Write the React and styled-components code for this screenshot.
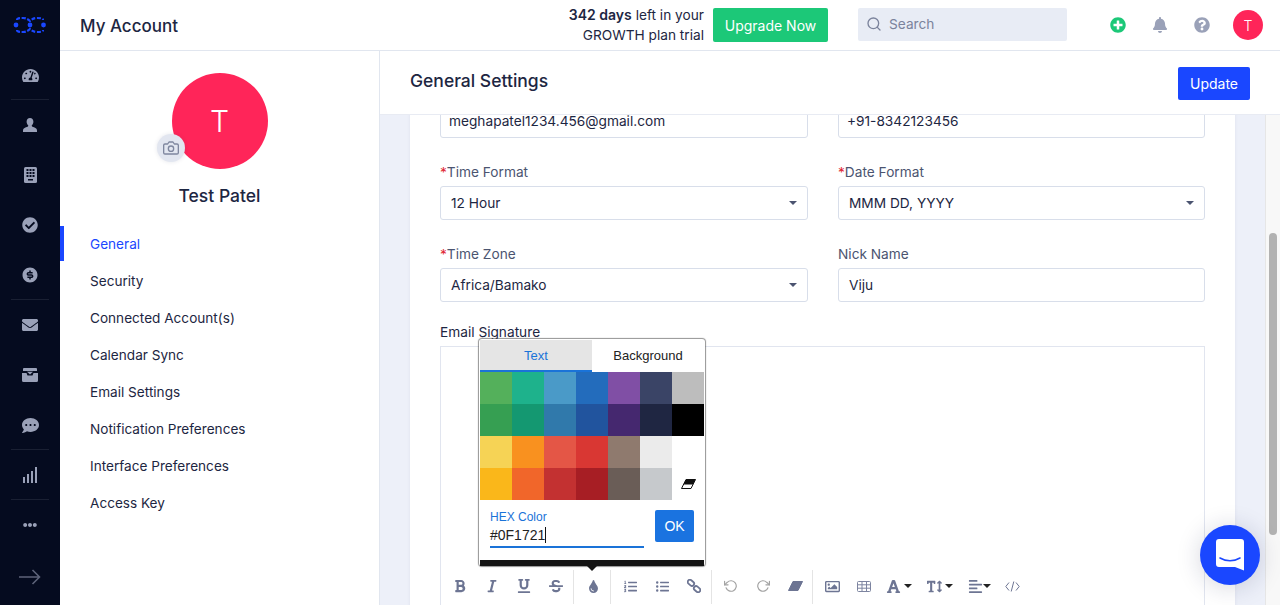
import React from 'react';
import styled, { createGlobalStyle } from 'styled-components';
import {
  FaBold, FaItalic, FaUnderline, FaStrikethrough, FaTint, FaListOl, FaListUl,
  FaRegImage, FaFont, FaTextHeight, FaAlignLeft, FaTachometerAlt, FaCheckCircle,
  FaEnvelope, FaCommentDots, FaBell, FaQuestionCircle, FaPlusCircle, FaEllipsisH,
} from 'react-icons/fa';
import { RiMoneyDollarCircleFill } from 'react-icons/ri';
import { FiCamera, FiSearch, FiRotateCcw, FiRotateCw } from 'react-icons/fi';

const Global = createGlobalStyle`
  html, body { margin: 0; height: 605px; overflow: hidden; background: #fff; }
  * { box-sizing: border-box; }
  body { font-family: Inter, "Noto Sans", sans-serif; color: #1d2642; }
`;

const Shell = styled.div`display: flex; width: 1280px; height: 605px; overflow: hidden; position: relative;`;
const Rail = styled.nav`width: 60px; flex: none; background: #050b1f; display: flex; flex-direction: column; align-items: center; color: #9aa1b8;`;
const LogoSlot = styled.div`height: 50px; display: flex; align-items: center; justify-content: center;`;
const RailItem = styled.div`
  width: 100%; height: 50px; display: flex; align-items: center; justify-content: center; font-size: ${p => p.$size || 16}px;
  position: relative; padding-top: ${p => p.$drop || 0}px;
  ${p => p.$rule ? `&::after { content: ''; position: absolute; left: 11px; right: 11px; bottom: 0; height: 1px; background: #1a2033; }` : ''}
`;
const Main = styled.div`flex: 1; min-width: 0; display: flex; flex-direction: column;`;
const TopBar = styled.header`height: 51px; flex: none; border-bottom: 1px solid #e1e6ef; display: flex; align-items: center; padding: 0 17px 0 20px;`;
const PageTitle = styled.h1`margin: 2px 0 0; font-size: 17px; font-weight: 500; line-height: 22px; color: #1d2642; flex: 1;`;
const Trial = styled.div`font-size: 13.7px; line-height: 20px; text-align: right; width: 160px; color: #1d2642; b { font-weight: 600; font-size: 14px; }`;
const Upgrade = styled.button`
  width: 115px; height: 34px; margin-left: 9px; border: 0; border-radius: 2px; background: #1cc878; color: #fff;
  font: 400 14px Inter, sans-serif;
`;
const Search = styled.div`
  width: 209px; height: 33px; margin: -1px 0 0 30px; background: #e8ecf5; border-radius: 2px; display: flex; align-items: center;
  padding: 0 0 1px 8px; gap: 7px; color: #7b839c; font-size: 13.7px;
`;
const HeadIcons = styled.div`display: flex; align-items: center; margin-left: 43px; gap: 26px; font-size: 16px; color: #9aa1b8;`;
const GreenPlus = styled(FaPlusCircle)`color: #1cc878;`;
const SmallAvatar = styled.div`
  width: 30px; height: 30px; margin-left: -3px; border-radius: 50%; background: #ff2559; color: #fff; font-size: 14px; font-weight: 300;
  display: flex; align-items: center; justify-content: center;
`;
const Body = styled.div`flex: 1; min-height: 0; display: flex;`;
const Side = styled.aside`width: 320px; flex: none; border-right: 1px solid #e1e6ef; display: flex; flex-direction: column; padding-top: 22px;`;
const AvatarWrap = styled.div`position: relative; width: 96px; height: 96px; margin: 0 auto;`;
const BigAvatar = styled.div`
  width: 96px; height: 96px; border-radius: 50%; background: #ff2559; color: #fff; font-size: 30px; font-weight: 300;
  display: flex; align-items: center; justify-content: center;
`;
const CameraBadge = styled.div`
  position: absolute; left: -15px; top: 61px; width: 28px; height: 28px; border-radius: 50%; background: #e2e6f0;
  display: flex; align-items: center; justify-content: center; color: #7f879f; font-size: 16px; box-shadow: 0 0 4px rgba(40, 50, 90, .12);
`;
const UserName = styled.div`margin: 15px 0 18px; text-align: center; font-size: 17.5px; font-weight: 500; line-height: 24px; color: #1d2642;`;
const SideNav = styled.ul`list-style: none; margin: 0; padding: 0;`;
const SideItem = styled.li`
  height: 37px; display: flex; align-items: center; padding-left: ${p => p.$active ? 26 : 30}px; font-size: 13.6px;
  color: ${p => p.$active ? '#1a47ff' : '#1d2642'};
  ${p => p.$active ? 'border-left: 4px solid #1a47ff; height: 35px; margin-bottom: 1px;' : ''}
`;
const Content = styled.section`flex: 1; min-width: 0; display: flex; flex-direction: column;`;
const SubHeader = styled.div`height: 64px; flex: none; display: flex; align-items: center; justify-content: space-between; padding: 0 30px; background: #fff; border-bottom: 1px solid #e8ebf3;`;
const SubTitle = styled.h2`margin: 0 0 4px; font-size: 17.5px; font-weight: 500; color: #1d2642;`;
const UpdateBtn = styled.button`
  width: 72px; height: 33px; border: 0; border-radius: 2px; background: #1a47ff; color: #fff; font: 400 14px Inter, sans-serif; margin-top: 2px;
`;
const ScrollArea = styled.div`flex: 1; min-height: 0; display: flex;`;
const Canvas = styled.div`flex: 1; min-width: 0; overflow: hidden; background: #edf0f9; padding: 0 30px;`;
const Card = styled.div`background: #fff; padding: 0 30px; height: 600px; box-shadow: 0 0 3px rgba(40, 50, 90, .08);`;
const FormGrid = styled.div`display: grid; grid-template-columns: 368px 367px; column-gap: 30px; margin-top: -11px;`;
const Field = styled.div`height: ${p => p.$bare ? 58 : 82}px;`;
const Label = styled.label`display: block; font-size: 13.7px; line-height: 20px; height: 20px; margin-bottom: 4px; color: #4b5470; i { color: #e0242f; font-style: normal; }`;
const InputBox = styled.div`
  position: relative; height: 34px; border: 1px solid #d8deea; border-radius: 3px; padding: 0 ${p => p.$tight ? 8 : 10}px; display: flex; align-items: center;
  font-size: 13.7px; color: #1d2642; background: #fff;
`;
const Caret = styled.span`position: absolute; right: 10px; top: 14px; width: 0; height: 0; border: 4px solid transparent; border-top: 4px solid #4b5470;`;
const SigLabel = styled.div`font-size: 13.7px; line-height: 20px; height: 20px; margin-top: -4px; color: #1d2642;`;
const Editor = styled.div`position: relative; border: 1px solid #e1e5ef; margin-top: 4px; width: 765px; height: 300px;`;
const EditArea = styled.div`height: 223px;`;
const Toolbar = styled.div`display: flex; padding-left: 3px; height: 34px;`;
const ToolGroup = styled.div`display: flex; padding-right: 1px; margin-right: 3px; ${p => p.$last ? '' : 'border-right: 1px solid #e4e4e4;'}`;
const ToolBtn = styled.div`
  width: ${p => p.$w || 32}px; height: 32px; display: flex; align-items: center; justify-content: center; font-size: ${p => p.$size || 13}px; gap: ${p => p.$gap ?? 3}px;
  color: ${p => p.$muted ? '#a3a3a3' : '#6d7593'};
`;
const ToolCaret = styled.span`width: 0; height: 0; border: 4px solid transparent; border-top: 4px solid #222; border-bottom: 0;`;
const Popover = styled.div`
  position: absolute; left: 38px; top: -8px; width: 226px; height: 227px; background: #fff; border-radius: 3px;
  box-shadow: 0 0 1px 1px rgba(60, 60, 60, .55); padding: 1px 0 0 1px; font-family: "Liberation Sans", Arial, sans-serif; z-index: 2;
`;
const Tabs = styled.div`display: flex; height: 32px; width: 224px;`;
const Tab = styled.div`
  flex: none; width: 112px; display: flex; align-items: center; justify-content: center; font-size: 13px;
  background: ${p => p.$active ? '#e5e5e5' : '#fff'}; color: ${p => p.$active ? '#1a73d8' : '#222'};
  border-bottom: 2px solid ${p => p.$active ? '#1a73d8' : 'transparent'};
`;
const Swatches = styled.div`display: grid; grid-template-columns: repeat(7, 32px); grid-auto-rows: 32px;`;
const Swatch = styled.div`background: ${p => p.$c}; display: flex; align-items: center; justify-content: center;`;
const HexRow = styled.div`display: flex; padding: 10px 11px 0 10px; height: 60px; justify-content: space-between;`;
const HexField = styled.div`width: 154px; height: 38px; border-bottom: 2px solid #1a73d8; position: relative;`;
const HexLabel = styled.div`font-size: 12px; line-height: 14px; color: #1a73d8;`;
const HexValue = styled.div`font-size: 14px; line-height: 18px; color: #222; margin-top: 2px; span { border-right: 1px solid #111; }`;
const OkBtn = styled.button`width: 39px; height: 32px; border: 0; border-radius: 2px; background: #1a73e0; color: #fff; font: 14px "Liberation Sans", Arial, sans-serif;`;
const PopFoot = styled.div`height: 6px; width: 224px; background: #141414; position: relative; &::after { content: ''; position: absolute; left: 107px; top: 6px; border: 5px solid transparent; border-top: 5px solid #141414; border-bottom: 0; }`;
const ScrollBar = styled.div`width: 15px; flex: none; background: #f8f8f8; border-left: 1px solid #e6e6e6; padding: 118px 3px 0 3px;`;
const Thumb = styled.div`height: 302px; background: #b2b2b2; border-radius: 4px;`;
const ChatFab = styled.div`
  position: absolute; left: 1200px; top: 525px; width: 60px; height: 60px; border-radius: 50%; background: #1a47ff;
  display: flex; align-items: center; justify-content: center; box-shadow: 0 2px 24px rgba(20, 30, 70, .18);
`;

const Logo = () => (
  <svg width="34" height="18" viewBox="0 0 34 18" fill="none">
    <circle cx="3" cy="9" r="2.4" fill="#1a47ff" /><circle cx="17" cy="9" r="2.4" fill="#1a47ff" /><circle cx="30.5" cy="9" r="2.4" fill="#1a47ff" />
    <path d="M4 4C4 2 7 2 10 2C13 2 15 3 17 5C19 3 21 2 24 2C27 2 30 2 30 4M4 14C4 16 7 16 10 16C13 16 15 15 17 13C19 15 21 16 24 16C27 16 30 16 30 14" stroke="#1a47ff" strokeWidth="2.2" strokeDasharray="4 1.6" />
  </svg>
);
const UserIcon = () => (
  <svg width="14" height="14" viewBox="0 0 14 14" fill="#9aa1b8">
    <path d="M7 0c2.1 0 3.4 1.6 3.4 3.7 0 1.5-.7 2.9-1.7 3.8 0 .8.5 1.2 1.5 1.6C12.1 9.8 14 10.3 14 12.6V14H0v-1.4c0-2.3 1.9-2.8 3.8-3.5 1-.4 1.5-.8 1.5-1.6C4.3 6.6 3.6 5.2 3.6 3.7 3.6 1.6 4.9 0 7 0z" />
  </svg>
);
const Keypad = () => (
  <svg width="13" height="16" viewBox="0 0 13 16">
    <rect width="13" height="16" rx="1.5" fill="#9aa1b8" />
    {[2.5, 5.5, 8.5].flatMap(x => [2, 5, 8].map(y => <rect key={`${x}-${y}`} x={x} y={y} width="2" height="2" fill="#050b1f" />))}
    <rect x="4" y="12" width="5" height="1.5" fill="#050b1f" />
  </svg>
);
const InboxIcon = () => (
  <svg width="16" height="14" viewBox="0 0 16 14">
    <path d="M2 0h12a1 1 0 0 1 1 1v2H1V1a1 1 0 0 1 1-1z M0 5h4.5l1 2.5h5l1-2.5H16v7.5a1.5 1.5 0 0 1-1.5 1.5h-13A1.5 1.5 0 0 1 0 12.5z" fill="#9aa1b8" />
    <path d="M5 3.8h6L8 6.5z" fill="#9aa1b8" />
  </svg>
);
const Bars = () => (
  <svg width="14" height="16" viewBox="0 0 14 16" fill="#9aa1b8">
    <rect x="0" y="10" width="2" height="6" /><rect x="4" y="7" width="2" height="9" /><rect x="8" y="4" width="2" height="12" /><rect x="12" y="0" width="2" height="16" />
  </svg>
);
const ArrowIcon = () => (
  <svg width="22" height="16" viewBox="0 0 22 16" fill="none" stroke="#5d6379" strokeWidth="1.6">
    <path d="M0 8h20.5M13.5 1l7 7-7 7" />
  </svg>
);
const CodeIcon = () => (
  <svg width="15" height="11" viewBox="0 0 15 11" fill="none" stroke="#6d7593" strokeWidth="1">
    <path d="M4 1.5L.8 5.5 4 9.5M11 1.5l3.2 4-3.2 4M8.8 .5L6.2 10.5" />
  </svg>
);
const LinkIcon = () => (
  <svg width="14" height="14" viewBox="0 0 14 14" fill="none" stroke="#6d7593" strokeWidth="1.8">
    <rect x="0.4" y="1.6" width="7" height="4.4" rx="2.2" transform="rotate(40 3.9 3.8)" />
    <rect x="6.600" y="8" width="7" height="4.4" rx="2.2" transform="rotate(40 10.1 10.2)" />
  </svg>
);
const TableIcon = () => (
  <svg width="14" height="11" viewBox="0 0 14 11" fill="none" stroke="#7d84a0" strokeWidth="1">
    <rect x=".5" y=".5" width="13" height="10" rx="1" />
    <path d="M.5 3.800h13M.5 7.200h13M5 .5v10M9.500 .5v10" />
  </svg>
);
const EraserIcon = ({ color, outline }) => (
  <svg width="15" height="10" viewBox="0 0 15 10">
    <path d="M5 .5h9.500L10 9.500H.5z" fill={outline ? '#fff' : color} stroke={color} strokeWidth="1" strokeLinejoin="round" />
    <path d="M5 .5h9.500L12 5.500H2.500z" fill={color} />
  </svg>
);
const ChatGlyph = () => (
  <svg width="28" height="32" viewBox="0 0 28 32">
    <path d="M3 0h22a3 3 0 0 1 3 3v28.500l-9-3.500H3a3 3 0 0 1-3-3V3a3 3 0 0 1 3-3z" fill="#fff" />
    <path d="M4 19c6 3.600 14 3.600 20 0" fill="none" stroke="#1a47ff" strokeWidth="1.600" strokeLinecap="round" />
  </svg>
);

const navItems = ['General', 'Security', 'Connected Account(s)', 'Calendar Sync', 'Email Settings', 'Notification Preferences', 'Interface Preferences', 'Access Key'];
const swatches = [
  '#54b05b', '#1eb28c', '#4a9ac8', '#236cbc', '#804fa5', '#3a4466', '#bdbdbd',
  '#369f52', '#149871', '#3079ab', '#21549e', '#45286f', '#1f2642', '#000000',
  '#f6d355', '#f9911f', '#e45646', '#d93733', '#8f7a6e', '#ebebeb', '#ffffff',
  '#fab71a', '#f1662a', '#c33131', '#a71e24', '#6a5d57', '#c6c9cc',
];

export default function App() {
  return (
    <>
      <Global />
      <Shell>
        <Rail>
          <LogoSlot><Logo /></LogoSlot>
          <RailItem $rule $size={17}><FaTachometerAlt /></RailItem>
          <RailItem><UserIcon /></RailItem>
          <RailItem><Keypad /></RailItem>
          <RailItem><FaCheckCircle /></RailItem>
          <RailItem $rule $size={18}><RiMoneyDollarCircleFill /></RailItem>
          <RailItem><FaEnvelope /></RailItem>
          <RailItem><InboxIcon /></RailItem>
          <RailItem $rule $size={17}><FaCommentDots /></RailItem>
          <RailItem $rule><Bars /></RailItem>
          <RailItem $size={14}><FaEllipsisH /></RailItem>
          <RailItem $drop={4}><ArrowIcon /></RailItem>
        </Rail>
        <Main>
          <TopBar>
            <PageTitle>My Account</PageTitle>
            <Trial><b>342 days</b> left in your GROWTH plan trial</Trial>
            <Upgrade>Upgrade Now</Upgrade>
            <Search><FiSearch size={16} />Search</Search>
            <HeadIcons>
              <GreenPlus />
              <FaBell />
              <FaQuestionCircle />
              <SmallAvatar>T</SmallAvatar>
            </HeadIcons>
          </TopBar>
          <Body>
            <Side>
              <AvatarWrap>
                <BigAvatar>T</BigAvatar>
                <CameraBadge><FiCamera /></CameraBadge>
              </AvatarWrap>
              <UserName>Test Patel</UserName>
              <SideNav>
                {navItems.map((n, i) => <SideItem key={n} $active={i === 0}>{n}</SideItem>)}
              </SideNav>
            </Side>
            <Content>
              <SubHeader>
                <SubTitle>General Settings</SubTitle>
                <UpdateBtn>Update</UpdateBtn>
              </SubHeader>
              <ScrollArea>
                <Canvas>
                  <Card>
                    <FormGrid>
                      <Field $bare><InputBox $tight>meghapatel1234.456@gmail.com</InputBox></Field>
                      <Field $bare><InputBox $tight>+91-8342123456</InputBox></Field>
                      <Field><Label><i>*</i>Time Format</Label><InputBox>12 Hour<Caret /></InputBox></Field>
                      <Field><Label><i>*</i>Date Format</Label><InputBox>MMM DD, YYYY<Caret /></InputBox></Field>
                      <Field><Label><i>*</i>Time Zone</Label><InputBox>Africa/Bamako<Caret /></InputBox></Field>
                      <Field><Label>Nick Name</Label><InputBox>Viju</InputBox></Field>
                    </FormGrid>
                    <SigLabel>Email Signature</SigLabel>
                    <Editor>
                      <Popover>
                        <Tabs><Tab $active>Text</Tab><Tab>Background</Tab></Tabs>
                        <Swatches>
                          {swatches.map((c, i) => <Swatch key={i} $c={c} />)}
                          <Swatch $c="#fff"><EraserIcon color="#111" outline /></Swatch>
                        </Swatches>
                        <HexRow>
                          <HexField>
                            <HexLabel>HEX Color</HexLabel>
                            <HexValue><span>#0F1721</span></HexValue>
                          </HexField>
                          <OkBtn>OK</OkBtn>
                        </HexRow>
                        <PopFoot />
                      </Popover>
                      <EditArea />
                      <Toolbar>
                        <ToolGroup>
                          <ToolBtn $size={14}><FaBold /></ToolBtn><ToolBtn $size={14}><FaItalic /></ToolBtn><ToolBtn $size={14}><FaUnderline /></ToolBtn><ToolBtn $size={14}><FaStrikethrough /></ToolBtn>
                        </ToolGroup>
                        <ToolGroup><ToolBtn><FaTint /></ToolBtn></ToolGroup>
                        <ToolGroup><ToolBtn><FaListOl /></ToolBtn><ToolBtn><FaListUl /></ToolBtn><ToolBtn><LinkIcon /></ToolBtn></ToolGroup>
                        <ToolGroup>
                          <ToolBtn $muted $size={14}><FiRotateCcw /></ToolBtn><ToolBtn $muted $size={14}><FiRotateCw /></ToolBtn><ToolBtn><EraserIcon color="#6d7593" /></ToolBtn>
                        </ToolGroup>
                        <ToolGroup $last>
                          <ToolBtn $size={15}><FaRegImage /></ToolBtn><ToolBtn><TableIcon /></ToolBtn>
                          <ToolBtn $w={38} $size={15}><FaFont /><ToolCaret /></ToolBtn>
                          <ToolBtn $w={44} $size={15}><FaTextHeight /><ToolCaret /></ToolBtn>
                          <ToolBtn $w={34} $gap={-6} $size={15}><FaAlignLeft /><ToolCaret /></ToolBtn>
                          <ToolBtn><CodeIcon /></ToolBtn>
                        </ToolGroup>
                      </Toolbar>
                    </Editor>
                  </Card>
                </Canvas>
                <ScrollBar><Thumb /></ScrollBar>
              </ScrollArea>
            </Content>
          </Body>
        </Main>
        <ChatFab><ChatGlyph /></ChatFab>
      </Shell>
    </>
  );
}
